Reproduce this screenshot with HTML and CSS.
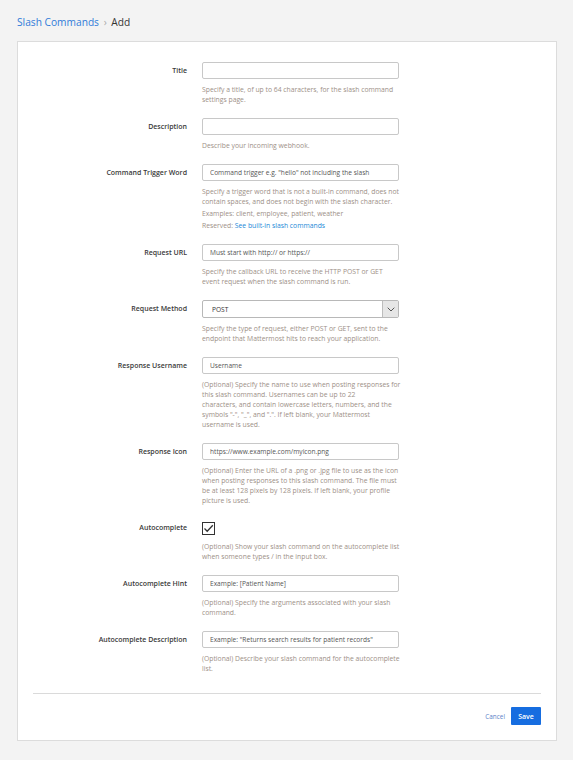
FILE: index.html
```html
<!DOCTYPE html>
<html lang="en">
<head>
  <meta charset="UTF-8">
  <meta name="viewport" content="width=device-width, initial-scale=1.0">
  <title>Slash Commands - Add</title>
  <link rel="stylesheet" href="styles.css">
</head>
<body>
  <div class="breadcrumb">
    <a href="#">Slash Commands</a>
    <span class="sep">&rsaquo;</span>
    <span class="current">Add</span>
  </div>

  <div class="panel">
    <form class="form">
      <div class="row">
        <label class="label">Title</label>
        <div class="field">
          <input class="input" type="text">
          <div class="help">Specify a title, of up to 64 characters, for the slash command settings page.</div>
        </div>
      </div>

      <div class="row">
        <label class="label">Description</label>
        <div class="field">
          <input class="input" type="text">
          <div class="help">Describe your incoming webhook.</div>
        </div>
      </div>

      <div class="row">
        <label class="label">Command Trigger Word</label>
        <div class="field">
          <input class="input" type="text" placeholder='Command trigger e.g. "hello" not including the slash'>
          <div class="help">Specify a trigger word that is not a built-in command, does not contain spaces, and does not begin with the slash character.</div>
          <div class="help help-extra">Examples: client, employee, patient, weather</div>
          <div class="help help-extra">Reserved: <a href="#">See built-in slash commands</a></div>
        </div>
      </div>

      <div class="row">
        <label class="label">Request URL</label>
        <div class="field">
          <input class="input" type="text" placeholder="Must start with http:// or https://">
          <div class="help">Specify the callback URL to receive the HTTP POST or GET event request when the slash command is run.</div>
        </div>
      </div>

      <div class="row">
        <label class="label">Request Method</label>
        <div class="field">
          <div class="select">
            <select>
              <option>POST</option>
              <option>GET</option>
            </select>
            <span class="chevron">
              <svg width="8" height="5" viewBox="0 0 8 5"><path d="M0.7 0.7 L4 4 L7.3 0.7" fill="none" stroke="#555" stroke-width="1"/></svg>
            </span>
          </div>
          <div class="help">Specify the type of request, either POST or GET, sent to the endpoint that Mattermost hits to reach your application.</div>
        </div>
      </div>

      <div class="row">
        <label class="label">Response Username</label>
        <div class="field">
          <input class="input" type="text" placeholder="Username">
          <div class="help">(Optional) Specify the name to use when posting responses for this slash command. Usernames can be up to 22<br>characters, and contain lowercase letters, numbers, and the symbols "-", "_", and ".". If left blank, your Mattermost username is used.</div>
        </div>
      </div>

      <div class="row">
        <label class="label">Response Icon</label>
        <div class="field">
          <input class="input" type="text" placeholder="https://www.example.com/myicon.png">
          <div class="help">(Optional) Enter the URL of a .png or .jpg file to use as the icon when posting responses to this slash command. The file must be at least 128 pixels by 128 pixels. If left blank, your profile picture is used.</div>
        </div>
      </div>

      <div class="row">
        <label class="label">Autocomplete</label>
        <div class="field">
          <div class="check-line">
            <span class="checkbox">
              <svg width="11" height="9" viewBox="0 0 11 9"><path d="M1.5 4.5 L4.2 7.2 L9.8 1.2" fill="none" stroke="#333" stroke-width="1.3"/></svg>
            </span>
          </div>
          <div class="help">(Optional) Show your slash command on the autocomplete list when someone types / in the input box.</div>
        </div>
      </div>

      <div class="row">
        <label class="label">Autocomplete Hint</label>
        <div class="field">
          <input class="input" type="text" placeholder="Example: [Patient Name]">
          <div class="help">(Optional) Specify the arguments associated with your slash command.</div>
        </div>
      </div>

      <div class="row">
        <label class="label">Autocomplete Description</label>
        <div class="field">
          <input class="input" type="text" placeholder='Example: "Returns search results for patient records"'>
          <div class="help">(Optional) Describe your slash command for the autocomplete list.</div>
        </div>
      </div>
    </form>

    <div class="footer">
      <a href="#" class="cancel">Cancel</a>
      <button class="save" type="button">Save</button>
    </div>
  </div>
</body>
</html>
```

FILE: styles.css
```css
body {
  margin: 0;
  padding: 15px 16px 20px 17px;
  background: #f3f3f3;
  font-family: "Open Sans", sans-serif;
  color: #333;
}
a {
  color: #2389d7;
  text-decoration: none;
}
.breadcrumb {
  font-size: 10.2px;
  line-height: 14px;
  margin-bottom: 12px;
}
.breadcrumb a {
  color: #2f7bd9;
}
.breadcrumb .sep {
  color: #aaa;
  margin: 0 2px;
}
.breadcrumb .current {
  color: #333;
}
.panel {
  background: #fff;
  border: 1px solid #dcdcdc;
  padding: 0 15px 15px 15px;
}
.form {
  padding: 20px 0 19px 0;
  border-bottom: 1px solid #dadada;
}
.row {
  display: grid;
  grid-template-columns: 154px 197px;
  column-gap: 15px;
  margin-bottom: 13px;
}
.row:last-child {
  margin-bottom: 0;
}
.label {
  text-align: right;
  font-size: 7px;
  font-weight: 600;
  line-height: 17px;
  color: #3a3a3a;
}
.input {
  display: block;
  box-sizing: border-box;
  width: 197px;
  height: 17px;
  margin: 0;
  padding: 0 7px;
  border: 1px solid #c8c8c8;
  border-radius: 2px;
  font-family: "Open Sans", sans-serif;
  font-size: 6.6px;
  color: #333;
  outline: none;
}
.input::placeholder {
  color: #555;
  opacity: 1;
}
.help {
  margin-top: 6px;
  width: 199px;
  font-size: 6.8px;
  line-height: 10px;
  color: #9d9087;
}
.help-extra {
  margin-top: 2px;
}
.select {
  display: flex;
  box-sizing: border-box;
  width: 197px;
  height: 18px;
  border: 1px solid #b8b8b8;
  border-radius: 2px;
}
.select select {
  flex: 1;
  appearance: none;
  border: none;
  background: transparent;
  padding: 0 9px;
  font-family: "Open Sans", sans-serif;
  font-size: 6.6px;
  color: #333;
  outline: none;
}
.chevron {
  width: 15px;
  display: flex;
  align-items: center;
  justify-content: center;
  background: #e6e6e6;
  border-left: 1px solid #bdbdbd;
}
.check-line {
  height: 17px;
  display: flex;
  align-items: center;
}
.checkbox {
  box-sizing: border-box;
  width: 13px;
  height: 13px;
  margin-top: 2px;
  border: 1.3px solid #333;
  display: flex;
  align-items: center;
  justify-content: center;
}
.footer {
  display: flex;
  justify-content: flex-end;
  align-items: center;
  gap: 6px;
  padding-top: 13px;
}
.cancel {
  font-size: 6.4px;
  color: #5b84c9;
}
.save {
  width: 30px;
  height: 18px;
  padding: 0;
  border: none;
  border-radius: 1px;
  background: #166de0;
  color: #fff;
  font-family: "Open Sans", sans-serif;
  font-size: 7px;
  font-weight: 600;
  cursor: pointer;
}
```
